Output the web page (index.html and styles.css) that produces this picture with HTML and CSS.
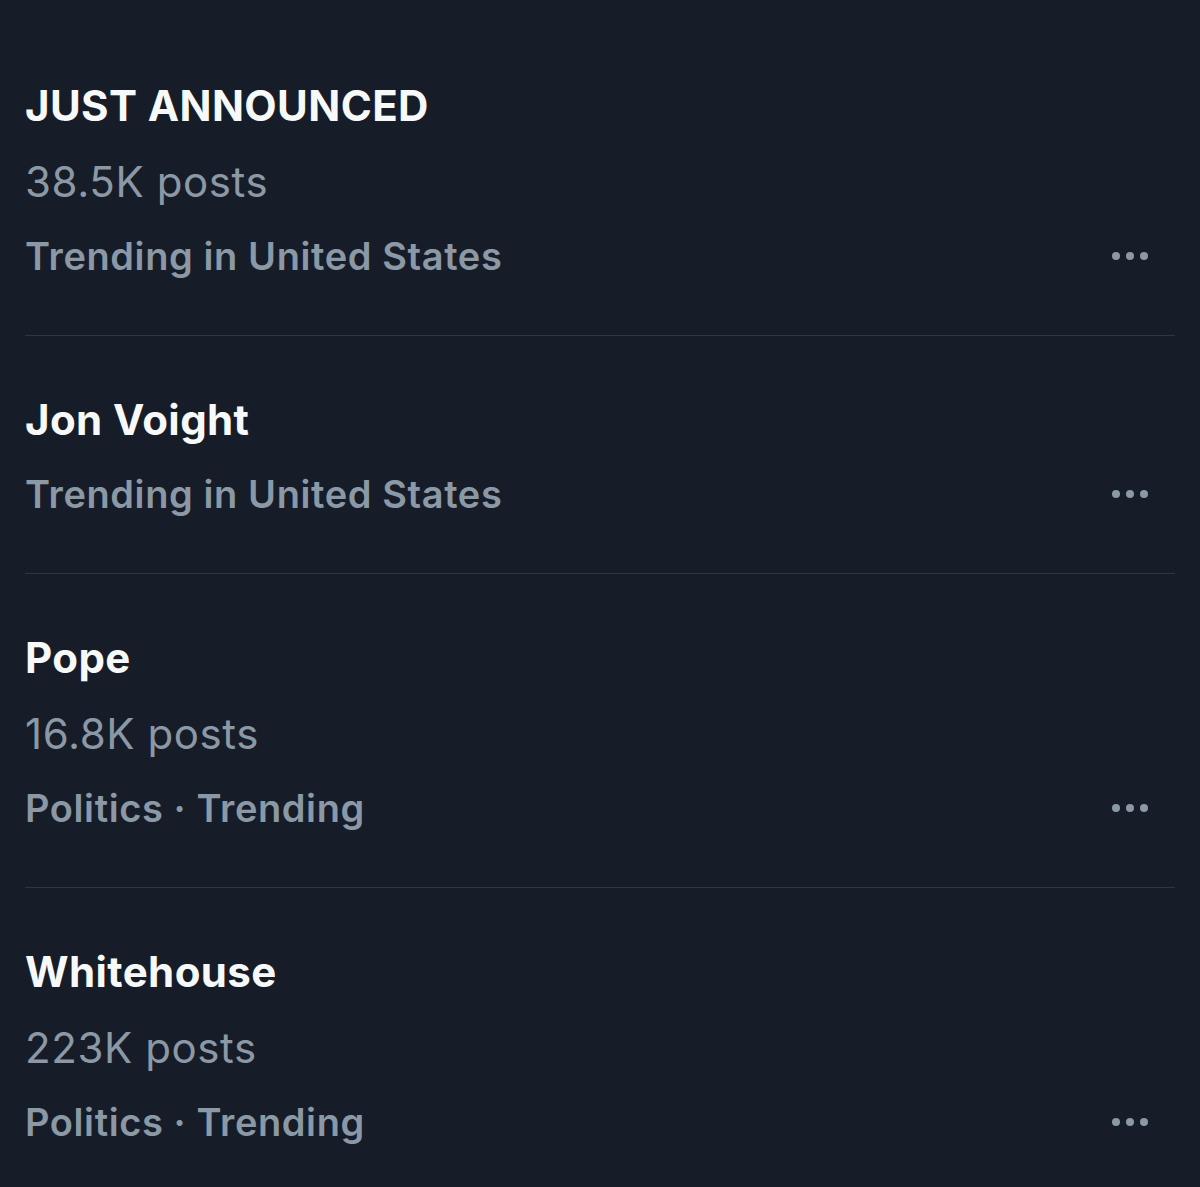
FILE: index.html
```html
<!DOCTYPE html>
<html lang="en">
<head>
  <meta charset="UTF-8">
  <title>Trending</title>
  <meta name="viewport" content="width=device-width, initial-scale=1.0">
  <link rel="stylesheet" href="styles.css">
</head>
<body>

  <div class="trends">

    <div class="trend">
      <div class="trend-text">
        <div class="trend-title">JUST ANNOUNCED</div>
        <div class="trend-count">38.5K posts</div>
        <div class="trend-meta">Trending in United States</div>
      </div>
      <button class="more" aria-label="More"><span></span><span></span><span></span></button>
    </div>

    <div class="trend">
      <div class="trend-text">
        <div class="trend-title">Jon Voight</div>
        <div class="trend-meta">Trending in United States</div>
      </div>
      <button class="more" aria-label="More"><span></span><span></span><span></span></button>
    </div>

    <div class="trend">
      <div class="trend-text">
        <div class="trend-title">Pope</div>
        <div class="trend-count">16.8K posts</div>
        <div class="trend-meta">Politics · Trending</div>
      </div>
      <button class="more" aria-label="More"><span></span><span></span><span></span></button>
    </div>

    <div class="trend last">
      <div class="trend-text">
        <div class="trend-title">Whitehouse</div>
        <div class="trend-count">223K posts</div>
        <div class="trend-meta">Politics · Trending</div>
      </div>
      <button class="more" aria-label="More"><span></span><span></span><span></span></button>
    </div>

  </div>

</body>
</html>
```

FILE: styles.css
```css
body {
  background-color: #171d28;
  font-family: Inter, "Noto Sans", sans-serif;
  color: #f7f9f9;
  margin: 0;
  padding: 0;
}

.trends {
  padding: 22px 25px 0;
}

.trend {
  display: flex;
  align-items: flex-end;
  padding: 46px 0 43px;
  border-bottom: 1px solid #2f3641;
}

.trend.last {
  border-bottom: none;
}

.trend-text {
  flex: 1;
}

.trend-title {
  font-size: 42px;
  font-weight: 700;
  line-height: 76px;
  letter-spacing: 0.4px;
}

.trend-count {
  font-size: 42px;
  font-weight: 400;
  line-height: 76px;
  letter-spacing: 0.6px;
  color: #8b98a5;
}

.trend-meta {
  font-size: 38px;
  font-weight: 600;
  line-height: 72px;
  letter-spacing: 0.6px;
  color: #8b98a5;
}

.more {
  display: flex;
  align-items: center;
  justify-content: flex-end;
  gap: 6px;
  width: 80px;
  height: 72px;
  padding: 0 27px 0 0;
  background: none;
  border: none;
}

.more span {
  width: 8px;
  height: 8px;
  border-radius: 50%;
  background-color: #8b98a5;
}
```
